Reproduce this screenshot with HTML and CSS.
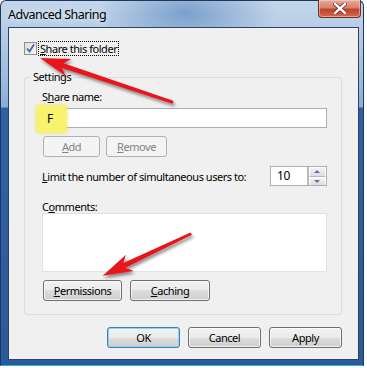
FILE: index.html
```html
<!DOCTYPE html>
<html lang="en">
<head>
    <meta charset="UTF-8">
    <title>Advanced Sharing</title>
    <link rel="stylesheet" href="styles.css">
</head>
<body>
    <div class="window">
        <div class="titlebar">
            <span class="title">Advanced Sharing</span>
            <button class="close" title="Close">
                <svg width="14" height="11" viewBox="0 0 14 11">
                    <path d="M2 1 L12 10 M12 1 L2 10" stroke="#6a2a20" stroke-width="4" stroke-linecap="square"/>
                    <path d="M2 1 L12 10 M12 1 L2 10" stroke="#fff" stroke-width="2.4" stroke-linecap="square"/>
                </svg>
            </button>
        </div>

        <div class="client">
            <label class="check-row">
                <span class="checkbox">
                    <svg width="11" height="11" viewBox="0 0 11 11">
                        <path d="M2 5.5 L4.5 8.5 L9 1.5" fill="none" stroke="#4b64a8" stroke-width="1.8"/>
                    </svg>
                </span>
                <span class="focus"><u>S</u>hare this folder</span>
            </label>

            <fieldset class="group">
                <legend>Settings</legend>

                <div class="field-label">S<u>h</u>are name:</div>
                <div class="textbox"></div>

                <div class="btn-row">
                    <button class="btn btn-add" disabled><u>A</u>dd</button>
                    <button class="btn btn-remove" disabled><u>R</u>emove</button>
                </div>

                <div class="limit-row">
                    <span><u>L</u>imit the number of simultaneous users to:</span>
                    <div class="spinner">
                        <span class="spin-value">10</span>
                        <div class="spin-buttons">
                            <span class="spin-btn up"></span>
                            <span class="spin-btn down"></span>
                        </div>
                    </div>
                </div>

                <div class="field-label comments">C<u>o</u>mments:</div>
                <div class="textarea"></div>

                <div class="btn-row bottom">
                    <button class="btn btn-perm"><u>P</u>ermissions</button>
                    <button class="btn btn-cache"><u>C</u>aching</button>
                </div>
            </fieldset>

            <div class="footer">
                <button class="btn default">OK</button>
                <button class="btn">Cancel</button>
                <button class="btn">Apply</button>
            </div>

            <!-- annotation: highlighted share name -->
            <div class="highlight">F</div>
        </div>

        <!-- annotation arrows -->
        <svg class="arrows" width="367" height="368" viewBox="0 0 367 368">
            <defs>
                <filter id="shadow" x="-20%" y="-20%" width="140%" height="160%">
                    <feDropShadow dx="1.5" dy="2.5" stdDeviation="1.5" flood-color="#000" flood-opacity="0.45"/>
                </filter>
            </defs>
            <g fill="#e8161b" filter="url(#shadow)">
                <polygon points="40,58 71.3,59 63.6,63.2 172.5,100.6 171.5,103.4 62,68 65.7,76"/>
                <circle cx="172" cy="102" r="1.5"/>
                <polygon points="102.7,275.7 133.7,270.9 125.5,267.7 190.6,235.6 189.4,232.9 123.3,263.1 125.9,254.7"/>
                <circle cx="190" cy="234.3" r="1.5"/>
            </g>
        </svg>
    </div>
</body>
</html>
```

FILE: styles.css
```css
body {
    margin: 0;
    background: #fff;
    font-family: "Segoe UI", "Noto Sans", sans-serif;
    font-size: 11px;
    letter-spacing: -0.45px;
    color: #000;
}

button {
    font: inherit;
    letter-spacing: inherit;
    color: inherit;
}

.window {
    position: relative;
    width: 364px;
    height: 366px;
    box-sizing: border-box;
    padding: 0 4px 5px 7px;
    border: 1px solid #1f3857;
    border-bottom-color: #2fa9e4;
    border-radius: 6px 6px 0 0;
    background:
        radial-gradient(ellipse 90px 40px at 185px 12px, rgba(70, 120, 180, 0.55), rgba(70, 120, 180, 0)),
        linear-gradient(to bottom, #c3d6eb 0, #b2c9e3 40px, #9cbadc 80px, #8aaed6 106px, #2f61a2 107px, #2b5a9a 100%);
    display: flex;
    flex-direction: column;
}

.titlebar {
    height: 26px;
    display: flex;
    align-items: flex-start;
    justify-content: space-between;
}

.title {
    margin-top: 5px;
    font-size: 12.5px;
    letter-spacing: -0.5px;
    color: #000;
    text-shadow: 0 0 6px rgba(255, 255, 255, 0.9);
}

.close {
    width: 43px;
    height: 18px;
    margin: -1px -2px 0 0;
    padding: 0;
    border: 1px solid #6b3329;
    border-top: none;
    border-radius: 0 0 4px 4px;
    background: linear-gradient(to bottom, #e4ab9f 0, #d7826f 45%, #c2412a 55%, #d26a4f 100%);
    box-shadow: inset 0 0 0 1px rgba(255, 220, 210, 0.5);
    display: flex;
    align-items: center;
    justify-content: center;
}

.client {
    position: relative;
    flex: 1;
    border: 1px solid #2c4463;
    background: #f0f0f0;
    display: flex;
    flex-direction: column;
}

.check-row {
    display: flex;
    align-items: center;
    margin: 13px 0 0 15px;
    height: 15px;
}

.checkbox {
    width: 11px;
    height: 11px;
    border: 1px solid #8e8f8f;
    background: linear-gradient(135deg, #dcdcdc, #f6f6f6);
    display: flex;
    align-items: center;
    justify-content: center;
}

.focus {
    margin-left: 1px;
    padding: 0 1px;
    line-height: 13px;
    border: 1px dotted #000;
}

.group {
    margin: 14px 16px 0 15px;
    padding: 6px 14px 13px 17px;
    border: 1px solid #d5dfe5;
    border-radius: 3px;
    min-width: 0;
}

.group legend {
    margin-left: -11px;
    padding: 0 2px;
    line-height: 14px;
}

.field-label {
    line-height: 14px;
}

.textbox {
    margin-top: 4px;
    height: 18px;
    border: 1px solid #abadb3;
    background: #fff;
}

.btn-row {
    display: flex;
    gap: 6px;
    margin: 8px 0 0 1px;
}

.btn {
    height: 21px;
    padding: 0;
    border: 1px solid #707070;
    border-radius: 3px;
    background: linear-gradient(to bottom, #f2f2f2 0, #ebebeb 50%, #dddddd 50%, #cfcfcf 100%);
    box-shadow: inset 0 0 0 1px rgba(255, 255, 255, 0.7);
    line-height: 19px;
    text-align: center;
}

.btn:disabled {
    border-color: #adb2b5;
    background: #f4f4f4;
    box-shadow: none;
    color: #838383;
}

.btn-add {
    width: 57px;
}

.btn-remove {
    width: 61px;
}

.limit-row {
    display: flex;
    align-items: center;
    justify-content: space-between;
    margin-top: 9px;
}

.spinner {
    width: 55px;
    height: 18px;
    border: 1px solid #abadb3;
    background: #fff;
    display: flex;
}

.spin-value {
    flex: 1;
    padding-left: 6px;
    line-height: 18px;
    font-size: 12px;
}

.spin-buttons {
    width: 17px;
    border-left: 2px solid #b9b9b9;
    display: flex;
    flex-direction: column;
}

.spin-btn {
    position: relative;
    flex: 1;
    background: linear-gradient(to bottom, #f4f4f4, #dcdcdc);
    border: 1px solid #fff;
    border-bottom-color: #b9b9b9;
}

.spin-btn.down {
    border-bottom: none;
}

.spin-btn::after {
    content: "";
    position: absolute;
    left: 4px;
    top: 2px;
    border-left: 3.5px solid transparent;
    border-right: 3.5px solid transparent;
}

.spin-btn.up::after {
    border-bottom: 3px solid #5571b1;
}

.spin-btn.down::after {
    border-top: 3px solid #5571b1;
}

.comments {
    margin-top: 14px;
    line-height: 13px;
}

.textarea {
    height: 57px;
    border: 1px solid #dde3e8;
    background: #fff;
}

.btn-row.bottom {
    gap: 8px;
}

.btn-perm {
    width: 79px;
}

.btn-cache {
    width: 80px;
}

.footer {
    display: flex;
    justify-content: flex-end;
    gap: 8px;
    margin: 12px 16px 0 0;
}

.footer .btn {
    width: 73px;
}

.btn.default {
    border-color: #3c7fb1;
    box-shadow: inset 0 0 0 1px #8fd2f2;
}

.highlight {
    position: absolute;
    left: 28px;
    top: 78px;
    width: 29px;
    height: 26px;
    box-sizing: border-box;
    padding-left: 10px;
    line-height: 26px;
    font-size: 12px;
    background: #f7f36c;
    box-shadow: 0 0 3px 2px rgba(238, 234, 110, 0.7);
    border-radius: 2px;
}

.arrows {
    position: absolute;
    left: -1px;
    top: -1px;
    pointer-events: none;
}
```
